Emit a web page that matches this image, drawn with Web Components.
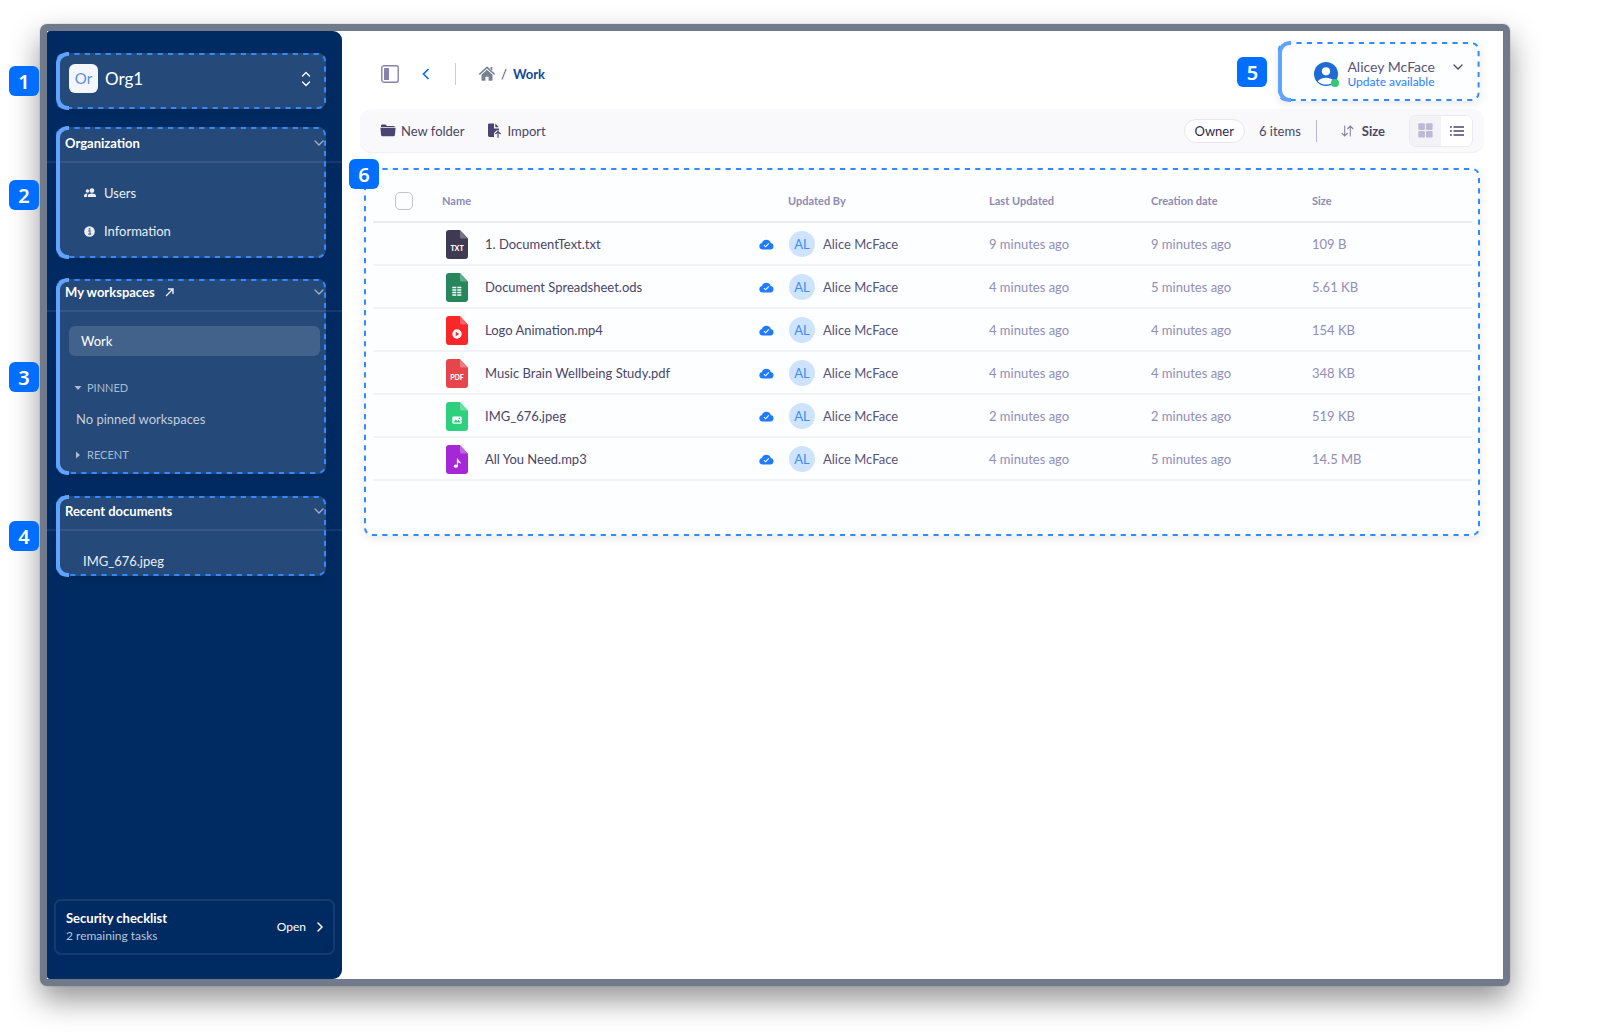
<!DOCTYPE html>
<html lang="en">
<head>
<meta charset="utf-8">
<title>Work</title>
<style>
body {
  margin: 0;
  font: 13px/20px Lato, "Noto Sans", sans-serif;
  color: #4a4566;
  background: #fff;
}
</style>
</head>
<body>
<app-window>
  <side-bar slot="side"></side-bar>
  <top-bar></top-bar>
  <tool-bar></tool-bar>
  <file-table></file-table>
</app-window>

<script>
const BASE = `
*, *::before { box-sizing: border-box }
button { font: inherit; color: inherit; background: none; border: 0; padding: 0; margin: 0; cursor: pointer; text-align: left }
a { color: inherit; text-decoration: none }
svg { display: block; flex: none }
h2, p, nav { margin: 0 }
`

const ICONS = {
    down: ['10', '6', '<path d="M1 1l4 4 4-4" fill="none" stroke="currentColor" stroke-width="1.3" stroke-linecap="round"/>'],
    right: ['6', '10', '<path d="M1 1l4 4-4 4" fill="none" stroke="currentColor" stroke-width="1.5" stroke-linecap="round"/>'],
    back: ['8', '12', '<path d="M6.5 1L1.5 6l5 5" fill="none" stroke="currentColor" stroke-width="1.7"/>'],
    updown: ['10', '16', '<path d="M1.5 5L5 1.5 8.5 5M1.5 11L5 14.5 8.5 11" fill="none" stroke="currentColor" stroke-width="1.3" stroke-linecap="round" stroke-linejoin="round"/>'],
    users: ['12', '10', '<g fill="currentColor"><circle cx="3.5" cy="3" r="1.8"/><circle cx="8" cy="2.6" r="2.3"/><path d="M0 9V7.5C0 6 2 5.3 3.7 5.5 3 6.2 2.900 7 2.900 9zM3.800 9V7.800c0-1.500 2-2.300 4.100-2.300S12 6.300 12 7.800V9z"/></g>'],
    info: ['11', '11', '<circle cx="5.5" cy="5.5" r="5.3" fill="currentColor"/><path d="M4.3 4.9h1.7v3M4.2 8.1h3" fill="none" stroke="#25497a" stroke-width="1.1"/><circle cx="5.6" cy="2.900" r=".9" fill="#25497a"/>'],
    open: ['9', '9', '<path d="M1 8l6.5-6.5M3 1h5v5" fill="none" stroke="currentColor" stroke-width="1.4"/>'],
    triDown: ['8', '6', '<path d="M.5 1h7L4 5z" fill="currentColor"/>'],
    triRight: ['8', '8', '<path d="M2 .5v7L6 4z" fill="currentColor"/>'],
    panel: ['18', '18', '<rect x=".8" y=".8" width="16.4" height="16.4" rx="2" fill="none" stroke="#8682ab" stroke-width="1.4"/><rect x="3" y="3" width="5" height="12" rx=".6" fill="#8682ab"/>'],
    home: ['16', '15', '<path d="M.8 8L8 1.4 15.2 8" fill="none" stroke="#758190" stroke-width="1.6" stroke-linecap="round" stroke-linejoin="round"/><path d="M11.5 1h1.8v3.5l-1.8-1.6z" fill="#758190"/><path d="M8 3.8L2.5 8.8V14q0 .7.7.7h3.200v-4h3.200v4h3.200q.7 0 .7-.7V8.800z" fill="#758190"/>'],
    folder: ['16', '13', '<path d="M1 3V1.6Q1 .5 2.1.5H5.5L7 1.9h6.5q1.3 0 1.4 1.1z" fill="#4a4472"/><path d="M.4 3.8h15.2L14.9 11q-.1 1.3-1.4 1.3h-11Q1.200 12.300 1.100 11z" fill="#4a4472"/>'],
    import: ['14', '15', '<path d="M0 1.8Q0 .4 1.4.4H6v5h5v2H8.5L6 10v3.9H1.4Q0 13.900 0 12.500zM7.300.6L10.800 4.200H7.300z" fill="#4a4472"/><path d="M10 14.700V8.800M7.300 11.200L10 8.500l2.700 2.700" fill="none" stroke="#4a4472" stroke-width="1.2"/>'],
    sort: ['13', '12', '<path d="M3.7.5v10.3M.7 8l3 3 3-3M9.3 11.5V1.2M6.4 4l2.9-3 2.900 3" fill="none" stroke="#8884a8" stroke-width="1.1"/>'],
    grid: ['15', '15', '<g fill="#bdb8d4"><rect x=".3" y=".3" width="6.6" height="6.6" rx="1"/><rect x="8" y=".3" width="6.6" height="6.6" rx="1"/><rect x=".3" y="8" width="6.6" height="6.6" rx="1"/><rect x="8" y="8" width="6.6" height="6.6" rx="1"/></g>'],
    list: ['14', '10', '<path d="M3.5 1H14M3.5 5H14M3.5 9H14M0 1h1.8M0 5h1.8M0 9h1.8" stroke="#4a4472" stroke-width="1.5"/>'],
    cloud: ['15', '11', '<path d="M3.6 10.6A3.4 3.4 0 0 1 2.9 3.9 4.7 4.7 0 0 1 11.8 3.9 3.4 3.4 0 0 1 11.6 10.6z" fill="#1f7cff"/><path d="M5 6.2l1.6 1.6L9.8 4.4" fill="none" stroke="#fff" stroke-width="1.1"/>'],
    user: ['24', '24', '<circle cx="12" cy="12" r="12" fill="#1f6bd6"/><circle cx="12" cy="9.3" r="4.1" fill="#fff"/><path d="M3.8 19.2Q6.5 15.7 12 15.7T20.2 19.2Q17 22.6 12 22.6T3.8 19.2z" fill="#fff"/>']
}

function icon(name) {
    let [w, h, body] = ICONS[name]
    return `<svg width="${w}" height="${h}" viewBox="0 0 ${w} ${h}" aria-hidden="true">${body}</svg>`
}

class Base extends HTMLElement {
    constructor() {
        super()
        this.attachShadow({mode: 'open'}).innerHTML = `<style>${BASE}${this.css()}</style>${this.html()}`
    }
    css() { return '' }
    html() { return '<slot></slot>' }
}

// numbered dashed outline laid over the part of the page it explains
customElements.define('guide-mark', class extends Base {
    css() { return `
:host { position: absolute; inset: 0; pointer-events: none; z-index: 1 }
.box, .box svg, .box rect { width: 100%; height: 100% }
.box {
  background: var(--fill, rgba(255, 255, 255, .145));
  border-radius: 8px;
  box-shadow: 0 3px 8px rgba(0, 0, 0, .09);
}
.box svg { overflow: visible }
.box rect {
  x: 1px; y: 1px; rx: 7px;
  width: calc(100% - 2px); height: calc(100% - 2px);
  fill: none; stroke: #338aff; stroke-width: 2px; stroke-dasharray: 5.2 5.2;
}
.bracket {
  position: absolute;
  left: 0; top: -1px; bottom: -1px; width: 13px;
  border: 4px solid #61a4ff;
  border-right: 0;
  border-radius: 12px 0 0 12px;
}
:host([plain]) .bracket { display: none }
.num {
  position: absolute;
  left: var(--num-x, -47px); top: var(--num-y, calc(50% - 15px));
  width: 30px; height: 30px;
  border-radius: 6px;
  background: #006fff;
  color: #fff;
  font: 600 20px/32px "Noto Sans", sans-serif;
  text-align: center;
}` }
    html() { return `
<div class="box"><svg><rect/></svg></div>
<div class="bracket"></div>
<div class="num">${this.getAttribute('num')}</div>` }
})

customElements.define('app-window', class extends Base {
    css() { return `
:host { display: block; padding: 24px 104px 49px 40px }
.frame {
  display: flex;
  min-height: calc(100vh - 73px);
  border: 7px solid #717a8b;
  border-radius: 7px;
  background: #fff;
  box-shadow: 0 0 0 1px rgba(0, 0, 0, .06), 0 14px 30px rgba(0, 0, 0, .42);
}
main { flex: 1; min-width: 0; padding: 11px 19px 0 18px }` }
    html() { return `<div class="frame"><slot name="side"></slot><main><slot></slot></main></div>` }
})

customElements.define('side-section', class extends Base {
    css() { return `
:host { display: block; position: relative }
header {
  display: flex;
  align-items: center;
  gap: 10px;
  padding: var(--head, 6px) 18px 8px;
  border-bottom: 2px solid rgba(255, 255, 255, .08);
}
h2 { font-size: 13px; line-height: 20px; font-weight: 700; color: #fff }
button { margin-left: auto; color: #8fa3bf }
.area { position: absolute; inset: 0 16px 0 9px }` }
    html() {
        let name = this.getAttribute('name')
        return `
<header>
  <h2>${name}</h2>
  ${this.hasAttribute('link') ? `<a href="#" aria-label="Open ${name}">${icon('open')}</a>` : ''}
  <button aria-label="Collapse ${name}">${icon('down')}</button>
</header>
<slot></slot>
<div class="area"><guide-mark num="${this.getAttribute('num')}"></guide-mark></div>` }
})

customElements.define('side-bar', class extends Base {
    css() { return `
:host {
  display: flex;
  flex-direction: column;
  flex: none;
  width: 295px;
  padding: 22px 0 24px;
  background: #002b62;
  border-radius: 3px 9px 9px 3px;
  color: #e6ebf3;
}
.org { position: relative; margin: 0 16px 0 9px; padding: 11px 15px 16px 13px }
.org button { display: flex; align-items: center; gap: 7px; width: 100%; font-size: 17px; color: #fff }
.org button svg { margin-left: auto }
.tile { width: 29px; border-radius: 6px; background: #f3f5fb; color: #3b7dd8; font-size: 15px; line-height: 29px; text-align: center }
#organization { margin-top: 18px; --num-y: 53px }
#workspaces { margin-top: 21px; --head: 3px }
#recent { margin-top: 22px; --head: 5px }
nav.org-links { padding: 11px 0 8px 37px }
.org-links a { display: grid; grid-template-columns: 12px 1fr; gap: 8px; align-items: center; height: 38px }
.work { display: block; margin: 14px 22px 0; padding: 5px 12px; border-radius: 6px; background: rgba(255, 255, 255, .14); color: #fff }
.group { display: flex; align-items: center; gap: 5px; padding-left: 27px; font-size: 11px; line-height: 20px; color: #9db0ca }
.pinned { margin-top: 22px }
.none { padding: 11px 29px 16px; color: #b8c5d9 }
.last { padding-bottom: 9px }
.doc { display: block; padding: 20px 36px 5px }
.check {
  display: flex;
  align-items: center;
  justify-content: space-between;
  margin: auto 7px 0;
  padding: 9px 10px;
  border: 2px solid #143c70;
  border-radius: 7px;
}
.check h2 { font-size: 13px; line-height: 17px; color: #fff }
.check p { font-size: 12px; line-height: 17px; color: #b8c5d9 }
.check button { display: flex; align-items: center; gap: 11px; font-size: 12px; color: #fff }` }
    html() { return `
<div class="org">
  <button aria-label="Switch organization"><span class="tile">Or</span>Org1 ${icon('updown')}</button>
  <guide-mark num="1"></guide-mark>
</div>
<side-section id="organization" name="Organization" num="2">
  <nav class="org-links">
    <a href="#">${icon('users')}Users</a>
    <a href="#">${icon('info')}Information</a>
  </nav>
</side-section>
<side-section id="workspaces" name="My workspaces" num="3" link>
  <a class="work" href="#">Work</a>
  <button class="group pinned">${icon('triDown')}PINNED</button>
  <p class="none">No pinned workspaces</p>
  <button class="group last">${icon('triRight')}RECENT</button>
</side-section>
<side-section id="recent" name="Recent documents" num="4">
  <a class="doc" href="#">IMG_676.jpeg</a>
</side-section>
<div class="check">
  <div>
    <h2>Security checklist</h2>
    <p>2 remaining tasks</p>
  </div>
  <button>Open ${icon('right')}</button>
</div>` }
})

customElements.define('top-bar', class extends Base {
    css() { return `
:host { display: flex; align-items: center; height: 63px; padding: 0 4px 0 21px }
.back { margin-left: 23px; color: #0a6cff }
.rule { width: 1px; height: 22px; margin: 0 23px 0 25px; background: #cfcddd }
nav { display: flex; align-items: center; gap: 6px }
nav a:last-child { font-weight: 700; color: #0f4796 }
.user { position: relative; align-self: flex-start; margin-left: auto; padding: 0 17px 0 36px; --fill: rgba(51, 138, 255, .012); --num-x: -41px }
.user button { display: grid; grid-template-columns: 24px 1fr 10px; align-items: center; column-gap: 9px; height: 59px; padding-top: 4px }
.face { position: relative }
.face::after { content: ""; position: absolute; right: -1px; bottom: -1px; width: 8px; height: 8px; border-radius: 4px; background: #35c874 }
.name { padding-right: 9px; font-size: 14px; line-height: 16px; color: #5a5478 }
.name small { display: block; font-size: 12px; line-height: 14px; color: #1f80ff }
.user button > svg { align-self: start; margin-top: 18px }` }
    html() { return `
<button aria-label="Toggle sidebar">${icon('panel')}</button>
<button class="back" aria-label="Back">${icon('back')}</button>
<span class="rule"></span>
<nav aria-label="Breadcrumb"><a href="#" aria-label="Home">${icon('home')}</a><span>/</span><a href="#">Work</a></nav>
<div class="user">
  <button><span class="face">${icon('user')}</span><span class="name">Alicey McFace<small>Update available</small></span>${icon('down')}</button>
  <guide-mark num="5"></guide-mark>
</div>` }
})

customElements.define('tool-bar', class extends Base {
    css() { return `
:host {
  display: flex;
  align-items: center;
  height: 43px;
  margin-top: 4px;
  padding: 0 11px 0 20px;
  border-radius: 12px;
  background: #f9f9fb;
  box-shadow: 0 1px 1px #eeeef3;
}
button { display: flex; align-items: center; gap: 5px }
.import { margin-left: 24px }
.owner { margin: 0 14px 0 auto; padding: 1px 10px; border: 1px solid #e7e6ee; border-radius: 12px; background: #fff; color: #2f2a4d }
.rule { width: 1px; height: 22px; margin: 0 24px 0 15px; background: #b9b6cc }
.sort { gap: 8px; font-weight: 700 }
.views { display: flex; margin-left: 24px; border: 1px solid #ebeaf0; border-radius: 7px; overflow: hidden }
.views button { justify-content: center; width: 31px; height: 30px; background: #fff }
.views button:first-child { background: #f3f2f6 }` }
    html() { return `
<button>${icon('folder')}New folder</button>
<button class="import">${icon('import')}Import</button>
<button class="owner">Owner</button>
<span>6 items</span>
<span class="rule"></span>
<button class="sort">${icon('sort')}Size</button>
<div class="views">
  <button aria-label="Grid view">${icon('grid')}</button>
  <button aria-label="List view" aria-pressed="true">${icon('list')}</button>
</div>` }
})

const KINDS = {
    txt: ['#3f3850', '<text x="11" y="21" class="t">TXT</text>'],
    ods: ['#25875a', '<path d="M6.3 14.5h4M11.3 14.5h4M6.3 17h4M11.3 17h4M6.3 19.5h4M11.3 19.5h4M6.3 22h4M11.3 22h4" stroke="#fff" stroke-width="1.5"/>'],
    mp4: ['#fb2528', '<circle cx="11" cy="18" r="4.7" fill="#fff"/><path d="M9.7 15.8v4.4l3.5-2.2z" fill="#fb2528"/>'],
    pdf: ['#e8444a', '<text x="11" y="21" class="t">PDF</text>'],
    jpeg: ['#2dd27c', '<rect x="6.3" y="14.5" width="9.4" height="7.3" rx="1.2" fill="#fff"/><path d="M7.5 20.5l2.3-3.2 1.5 2 1.3-1.500 2 2.700z" fill="#2dd27c"/><circle cx="13.3" cy="16.4" r=".8" fill="#2dd27c"/>'],
    mp3: ['#a726d6', '<ellipse cx="9.8" cy="21.2" rx="2" ry="1.6" fill="#fff"/><path d="M10.9 13.5h1q.2 1.8 2.3 3.2.8 1 .2 2.3-.9-1.600-2.500-1.500v3.700h-1z" fill="#fff"/>']
}

customElements.define('file-icon', class extends Base {
    css() { return `
:host { display: block; width: 22px }
.t { font: 900 7px Lato, sans-serif; fill: #fff; text-anchor: middle }` }
    html() {
        let [color, body] = KINDS[this.getAttribute('kind')]
        return `<svg width="22" height="29" viewBox="0 0 22 29" aria-hidden="true">
<path d="M3 0h11l8 8.500V26q0 3-3 3H3q-3 0-3-3V3q0-3 3-3z" fill="${color}"/>
<path d="M14 .5l7.500 8H15.500Q14 8.500 14 7z" fill="#fff" opacity=".3"/>${body}</svg>` }
})

const FILES = [
    ['1. DocumentText.txt', '9 minutes ago', '9 minutes ago', '109 B'],
    ['Document Spreadsheet.ods', '4 minutes ago', '5 minutes ago', '5.61 KB'],
    ['Logo Animation.mp4', '4 minutes ago', '4 minutes ago', '154 KB'],
    ['Music Brain Wellbeing Study.pdf', '4 minutes ago', '4 minutes ago', '348 KB'],
    ['IMG_676.jpeg', '2 minutes ago', '2 minutes ago', '519 KB'],
    ['All You Need.mp3', '4 minutes ago', '5 minutes ago', '14.5 MB']
]

customElements.define('file-table', class extends Base {
    css() { return `
:host {
  display: block;
  position: relative;
  margin: 16px 4px 0;
  padding: 0 8px 55px 9px;
  --fill: rgba(51, 138, 255, .012);
  --num-x: -15px;
  --num-y: -9px;
}
table { width: 100%; table-layout: fixed; border-collapse: separate; border-spacing: 0 }
th, td { padding: 0; text-align: left; border-bottom: 2px solid #f3f4f8; white-space: nowrap }
th { height: 55px; padding-top: 13px; font-size: 11px; line-height: 20px; font-weight: 700; color: #8e8ab3; border-color: #ececf2 }
td { height: 43px; padding-top: 1px; color: #918db8 }
input { appearance: none; display: block; width: 18px; height: 18px; margin: 0 0 0 22px; border: 1px solid #c4c0d8; border-radius: 5px; background: #fff }
.pick { width: 69px } .sync { width: 29px } .by { width: 201px } .updated { width: 162px } .created { width: 161px } .size { width: 160px }
.file { display: flex; align-items: center; gap: 17px; padding-left: 4px; color: #4a4566 }
.who { display: flex; align-items: center; gap: 8px; padding-left: 1px; color: #5a5478 }
.who b { width: 26px; border-radius: 13px; background: #d0e4ff; color: #3f8cf5; font-weight: 400; line-height: 26px; text-align: center }` }
    html() { return `
<table>
  <thead><tr>
    <th class="pick"><input type="checkbox" aria-label="Select all"></th>
    <th>Name</th>
    <th class="sync"></th>
    <th class="by">Updated By</th>
    <th class="updated">Last Updated</th>
    <th class="created">Creation date</th>
    <th class="size">Size</th>
  </tr></thead>
  <tbody>${FILES.map(([name, updated, created, size]) => `
    <tr>
      <td></td>
      <td><div class="file"><file-icon kind="${name.split('.').pop()}"></file-icon>${name}</div></td>
      <td>${icon('cloud')}</td>
      <td><div class="who"><b>AL</b>Alice McFace</div></td>
      <td>${updated}</td>
      <td>${created}</td>
      <td>${size}</td>
    </tr>`).join('')}
  </tbody>
</table>
<guide-mark num="6" plain></guide-mark>` }
})
</script>
</body>
</html>
